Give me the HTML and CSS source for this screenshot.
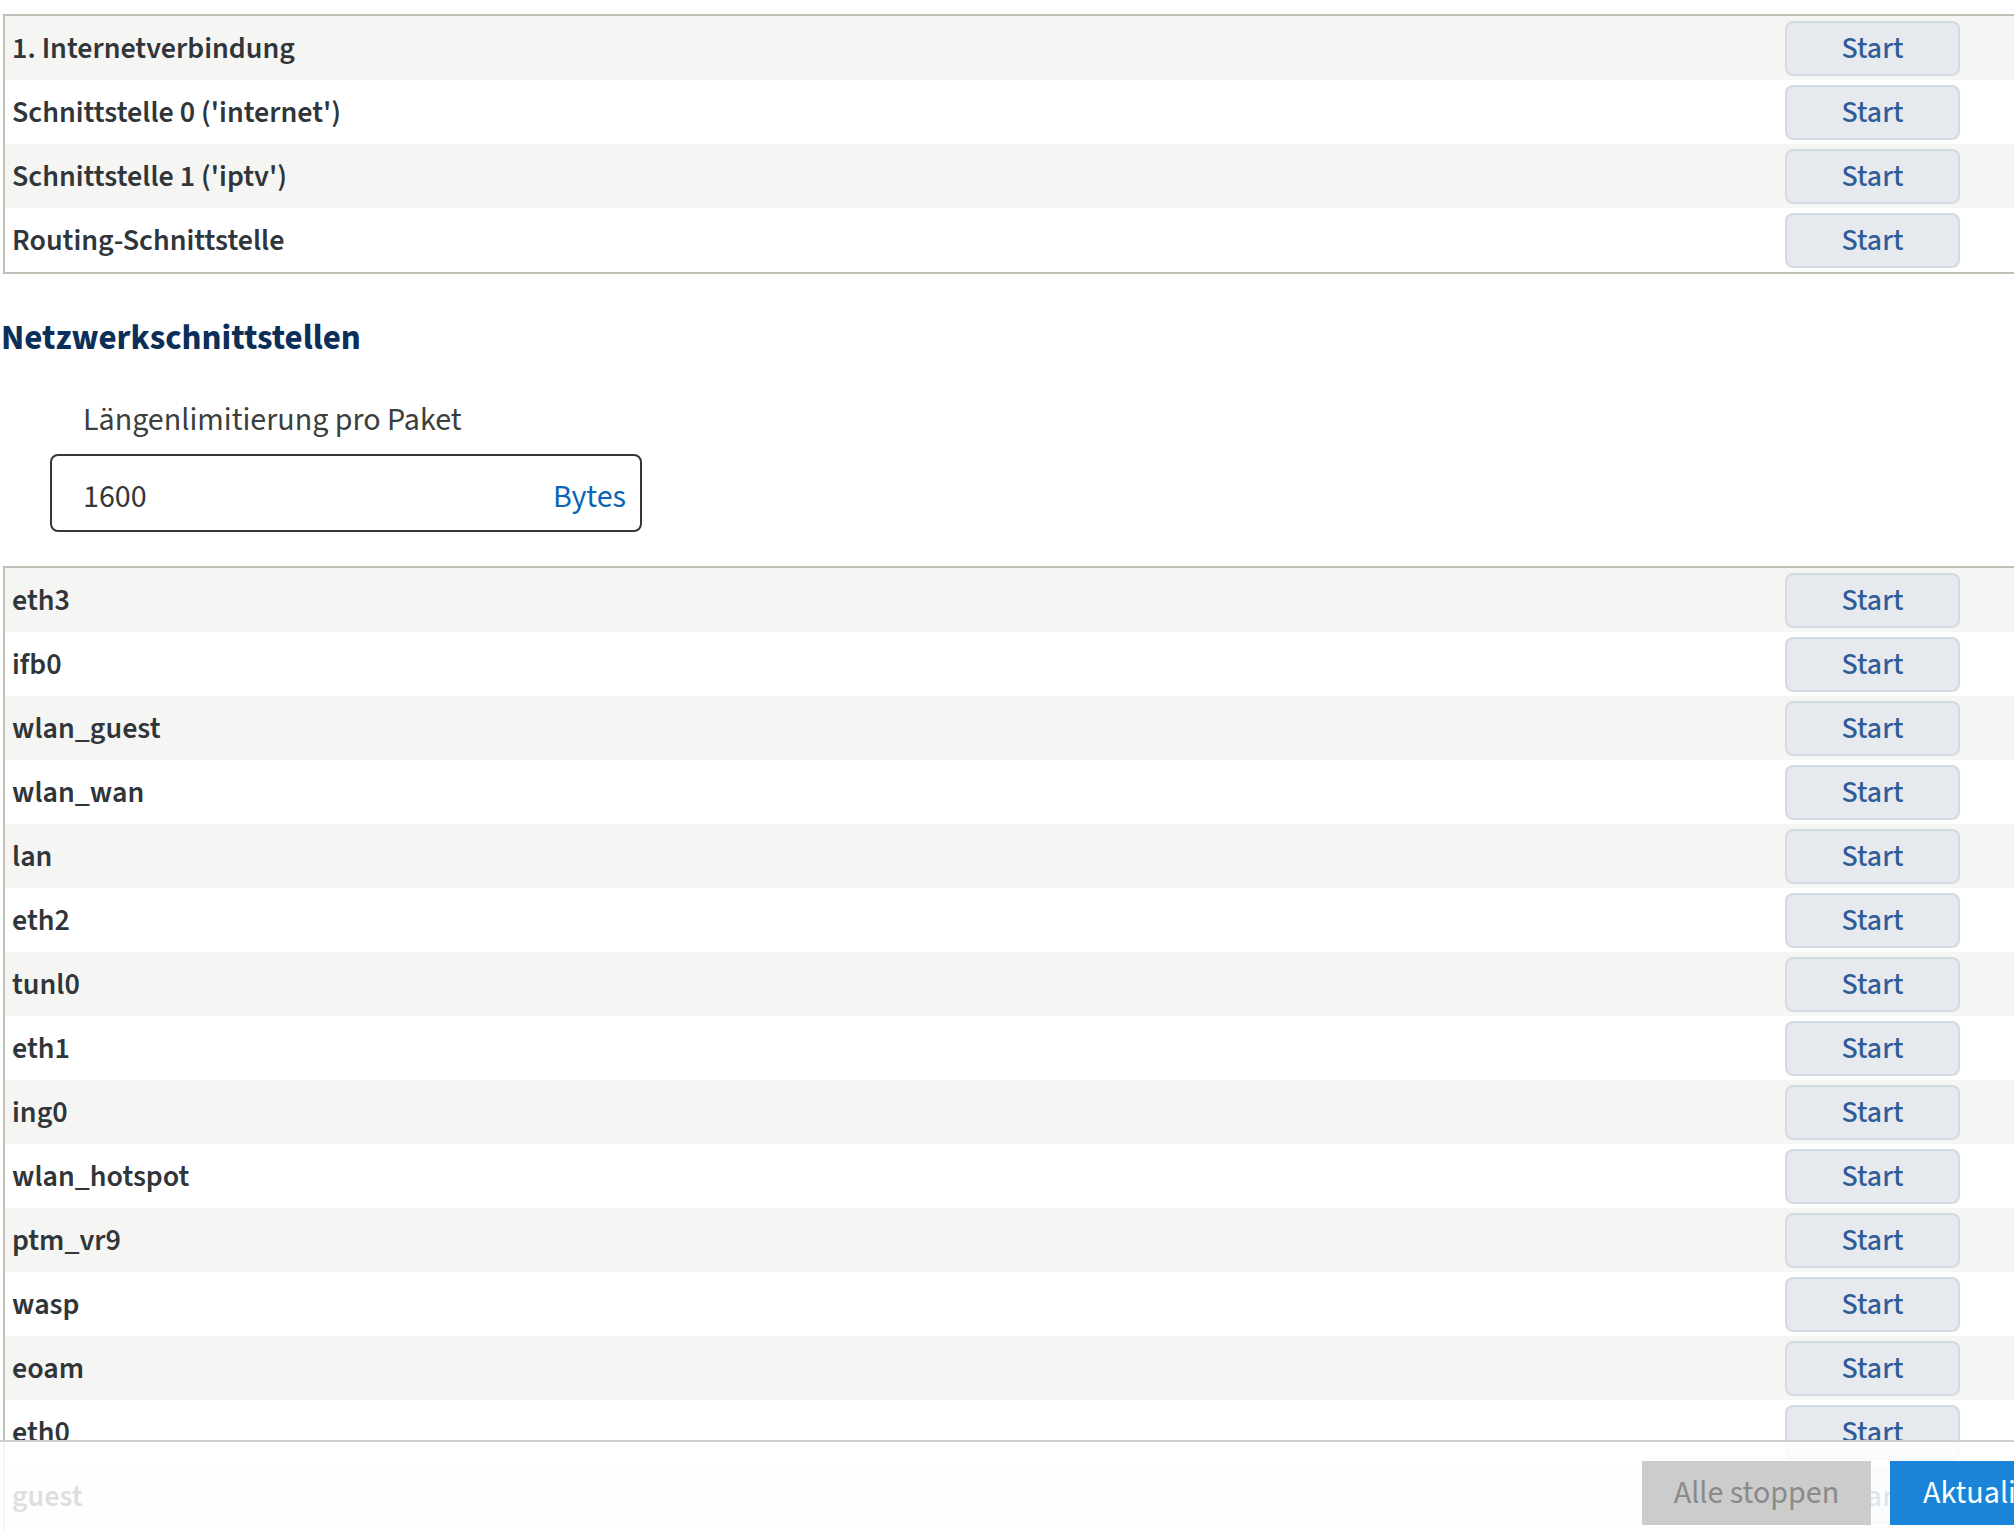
FILE: index.html
```html
<!DOCTYPE html>
<html lang="de">
<head>
<meta charset="utf-8">
<title>Paketmitschnitt</title>
<link rel="stylesheet" href="styles.css">
</head>
<body>
<main class="page">
  <section class="panel panel-top">
    <div class="row"><span class="row-label">1. Internetverbindung</span><button class="btn-start">Start</button></div>
    <div class="row"><span class="row-label">Schnittstelle 0 ('internet')</span><button class="btn-start">Start</button></div>
    <div class="row"><span class="row-label">Schnittstelle 1 ('iptv')</span><button class="btn-start">Start</button></div>
    <div class="row"><span class="row-label">Routing-Schnittstelle</span><button class="btn-start">Start</button></div>
  </section>

  <h2 class="section-title">Netzwerkschnittstellen</h2>

  <div class="field">
    <label class="field-label" for="len">Längenlimitierung pro Paket</label>
    <div class="field-box">
      <input id="len" class="field-input" type="text" value="1600">
      <span class="field-unit">Bytes</span>
    </div>
  </div>

  <section class="panel panel-ifaces">
    <div class="row"><span class="row-label">eth3</span><button class="btn-start">Start</button></div>
    <div class="row"><span class="row-label">ifb0</span><button class="btn-start">Start</button></div>
    <div class="row"><span class="row-label">wlan_guest</span><button class="btn-start">Start</button></div>
    <div class="row"><span class="row-label">wlan_wan</span><button class="btn-start">Start</button></div>
    <div class="row"><span class="row-label">lan</span><button class="btn-start">Start</button></div>
    <div class="row"><span class="row-label">eth2</span><button class="btn-start">Start</button></div>
    <div class="row"><span class="row-label">tunl0</span><button class="btn-start">Start</button></div>
    <div class="row"><span class="row-label">eth1</span><button class="btn-start">Start</button></div>
    <div class="row"><span class="row-label">ing0</span><button class="btn-start">Start</button></div>
    <div class="row"><span class="row-label">wlan_hotspot</span><button class="btn-start">Start</button></div>
    <div class="row"><span class="row-label">ptm_vr9</span><button class="btn-start">Start</button></div>
    <div class="row"><span class="row-label">wasp</span><button class="btn-start">Start</button></div>
    <div class="row"><span class="row-label">eoam</span><button class="btn-start">Start</button></div>
    <div class="row"><span class="row-label">eth0</span><button class="btn-start">Start</button></div>
    <div class="row"><span class="row-label">guest</span><button class="btn-start">Start</button></div>
    <div class="row"><span class="row-label">lo</span><button class="btn-start">Start</button></div>
  </section>
</main>

<footer class="action-bar">
  <button class="btn-stop">Alle stoppen</button>
  <button class="btn-refresh">Aktualisieren</button>
</footer>
</body>
</html>
```

FILE: styles.css
```css
html, body {
  margin: 0;
  padding: 0;
  overflow: hidden;
  background: #ffffff;
}

body {
  font-family: "Source Sans Pro", "Source Sans 3", Lato, "Noto Sans", sans-serif;
  color: #30353a;
  width: 2014px;
  height: 1530px;
}

.page {
  padding: 14px 0 0 3px;
}

.panel {
  width: 2060px;
  border: 2px solid #c0c0b6;
  box-sizing: border-box;
}

.row {
  display: flex;
  align-items: center;
  height: 64px;
  padding-left: 7px;
  padding-right: 101px;
  background: #ffffff;
}

.row:nth-child(odd) {
  background: #f5f5f3;
}

.row-label {
  flex: 1;
  font-size: 30px;
  font-weight: 600;
  color: #30353a;
  white-space: nowrap;
}

.btn-start {
  width: 175px;
  height: 55px;
  margin-top: 1px;
  border: 2px solid #d3dae2;
  border-radius: 8px;
  background: #e6e9ee;
  color: #2f5c98;
  font-family: inherit;
  font-size: 30px;
  font-weight: 500;
  padding: 0;
}

.section-title {
  margin: 44px 0 0 -2px;
  font-size: 35px;
  line-height: 40px;
  font-weight: 700;
  color: #0c2f59;
}

.field {
  margin: 44px 0 0 47px;
  display: flex;
  flex-direction: column;
}

.field-label {
  padding-left: 33px;
  font-size: 32px;
  line-height: 36px;
  color: #3a3f3d;
}

.field-box {
  margin-top: 16px;
  width: 592px;
  height: 78px;
  box-sizing: border-box;
  border: 2px solid #33373b;
  border-radius: 8px;
  display: flex;
  align-items: center;
  padding: 7px 14px 0 31px;
}

.field-input {
  flex: 1;
  min-width: 0;
  border: none;
  outline: none;
  padding: 0;
  background: transparent;
  font-family: inherit;
  font-size: 32px;
  color: #33383b;
}

.field-unit {
  font-size: 32px;
  color: #0b65b7;
}

.panel-ifaces {
  margin-top: 34px;
}

.action-bar {
  position: fixed;
  left: 0;
  bottom: 0;
  width: 2160px;
  height: 90px;
  box-sizing: border-box;
  border-top: 2px solid #cfcfcf;
  background: rgba(255, 255, 255, 0.84);
  display: flex;
  justify-content: flex-end;
  align-items: flex-start;
  gap: 19px;
  padding: 19px 20px 0 0;
}

.btn-stop,
.btn-refresh {
  height: 64px;
  border: none;
  border-radius: 0;
  font-family: inherit;
  font-size: 32px;
  padding: 0;
}

.btn-stop {
  width: 229px;
  background: #cccccc;
  color: #8a8a8a;
}

.btn-refresh {
  width: 250px;
  background: #1b84d8;
  color: #ffffff;
  text-align: left;
  padding-left: 33px;
}
```
